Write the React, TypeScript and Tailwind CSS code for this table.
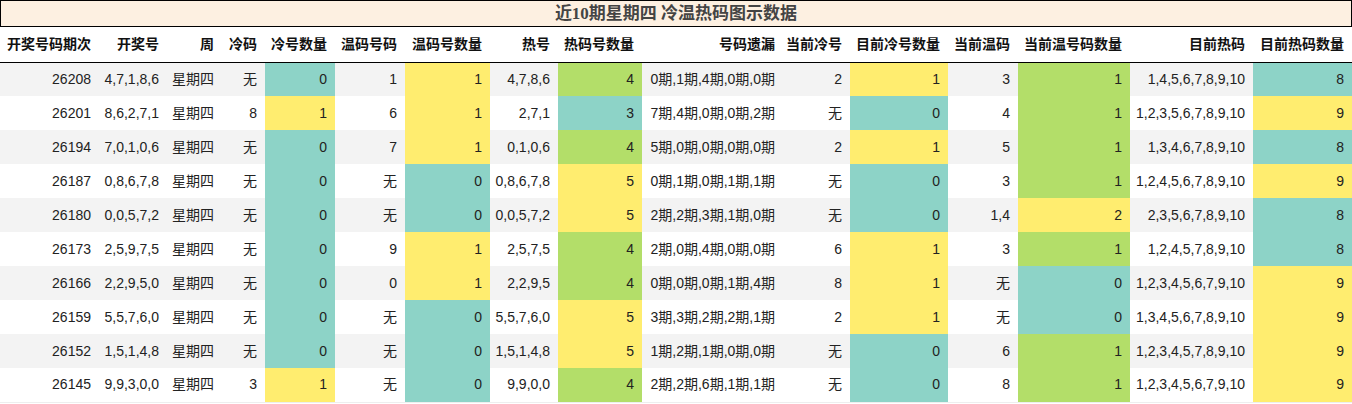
const T = 'bg-[#8dd3c7]';
const Y = 'bg-[#ffed6f]';
const G = 'bg-[#b3de69]';

type Cell = string | [string, string];

const HEADERS = [
  '开奖号码期次',
  '开奖号',
  '周',
  '冷码',
  '冷号数量',
  '温码号码',
  '温码号数量',
  '热号',
  '热码号数量',
  '号码遗漏',
  '当前冷号',
  '目前冷号数量',
  '当前温码',
  '当前温号码数量',
  '目前热码',
  '目前热码数量',
];

const WIDTHS = [99, 68, 55, 43, 70, 70, 85, 68, 84, 141, 67, 98, 70, 112, 123, 99];

const ROWS: Cell[][] = [
  ['26208', '4,7,1,8,6', '星期四', '无', ['0', T], '1', ['1', Y], '4,7,8,6', ['4', G], '0期,1期,4期,0期,0期', '2', ['1', Y], '3', ['1', G], '1,4,5,6,7,8,9,10', ['8', T]],
  ['26201', '8,6,2,7,1', '星期四', '8', ['1', Y], '6', ['1', Y], '2,7,1', ['3', T], '7期,4期,0期,0期,2期', '无', ['0', T], '4', ['1', G], '1,2,3,5,6,7,8,9,10', ['9', Y]],
  ['26194', '7,0,1,0,6', '星期四', '无', ['0', T], '7', ['1', Y], '0,1,0,6', ['4', G], '5期,0期,0期,0期,0期', '2', ['1', Y], '5', ['1', G], '1,3,4,6,7,8,9,10', ['8', T]],
  ['26187', '0,8,6,7,8', '星期四', '无', ['0', T], '无', ['0', T], '0,8,6,7,8', ['5', Y], '0期,1期,0期,1期,1期', '无', ['0', T], '3', ['1', G], '1,2,4,5,6,7,8,9,10', ['9', Y]],
  ['26180', '0,0,5,7,2', '星期四', '无', ['0', T], '无', ['0', T], '0,0,5,7,2', ['5', Y], '2期,2期,3期,1期,0期', '无', ['0', T], '1,4', ['2', Y], '2,3,5,6,7,8,9,10', ['8', T]],
  ['26173', '2,5,9,7,5', '星期四', '无', ['0', T], '9', ['1', Y], '2,5,7,5', ['4', G], '2期,0期,4期,0期,0期', '6', ['1', Y], '3', ['1', G], '1,2,4,5,7,8,9,10', ['8', T]],
  ['26166', '2,2,9,5,0', '星期四', '无', ['0', T], '0', ['1', Y], '2,2,9,5', ['4', G], '0期,0期,0期,1期,4期', '8', ['1', Y], '无', ['0', T], '1,2,3,4,5,6,7,9,10', ['9', Y]],
  ['26159', '5,5,7,6,0', '星期四', '无', ['0', T], '无', ['0', T], '5,5,7,6,0', ['5', Y], '3期,3期,2期,2期,1期', '2', ['1', Y], '无', ['0', T], '1,3,4,5,6,7,8,9,10', ['9', Y]],
  ['26152', '1,5,1,4,8', '星期四', '无', ['0', T], '无', ['0', T], '1,5,1,4,8', ['5', Y], '1期,2期,1期,0期,0期', '无', ['0', T], '6', ['1', G], '1,2,3,4,5,7,8,9,10', ['9', Y]],
  ['26145', '9,9,3,0,0', '星期四', '3', ['1', Y], '无', ['0', T], '9,9,0,0', ['4', G], '2期,2期,6期,1期,1期', '无', ['0', T], '8', ['1', G], '1,2,3,4,5,6,7,9,10', ['9', Y]],
];

export default function App() {
  return (
    <div className="w-[1352px] bg-white font-['Liberation_Sans','Noto_Sans_CJK_SC',sans-serif] text-[14px] text-[#222]">
      {/* 标题 */}
      <div className="h-[27px] border border-black bg-[#fdf0e1] flex items-center justify-center font-['Liberation_Serif','Noto_Sans_CJK_SC',serif] text-[17px] font-bold text-[#444] leading-none">
        近10期星期四 冷温热码图示数据
      </div>

      <table className="w-full table-fixed border-collapse border-b border-[#eeeeee]">
        <colgroup>
          {WIDTHS.map((w, i) => (
            <col key={i} style={{ width: w }} />
          ))}
        </colgroup>
        <thead>
          <tr className="h-[35px] border-b border-black">
            {HEADERS.map((h) => (
              <th key={h} className="pr-2 text-right font-bold whitespace-nowrap text-[#111]">
                {h}
              </th>
            ))}
          </tr>
        </thead>
        <tbody>
          {ROWS.map((row, ri) => (
            <tr key={ri} className={`h-[34px] ${ri % 2 === 0 ? 'bg-[#f3f3f3]' : 'bg-white'}`}>
              {row.map((cell, ci) => {
                const [text, bg] = Array.isArray(cell) ? cell : [cell, ''];
                return (
                  <td key={ci} className={`p-0 pr-2 text-right whitespace-nowrap ${bg}`}>
                    {text}
                  </td>
                );
              })}
            </tr>
          ))}
        </tbody>
      </table>
    </div>
  );
}
